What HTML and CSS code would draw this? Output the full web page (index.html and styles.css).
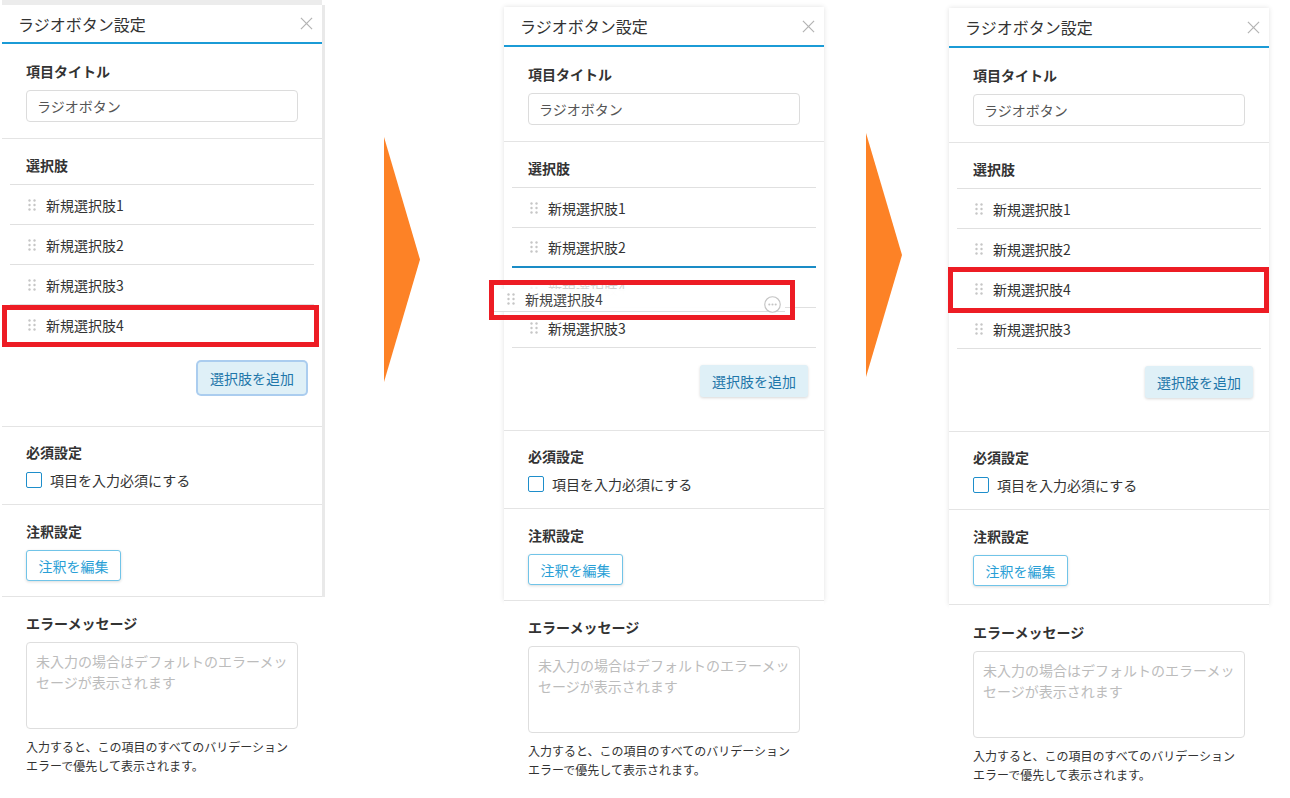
FILE: index.html
```html
<!DOCTYPE html>
<html lang="ja">
<head>
<meta charset="utf-8">
<title>ラジオボタン設定</title>
<link rel="stylesheet" href="styles.css">
</head>
<body>
<div class="page">

  <!-- Panel 1 -->
  <div class="shot s1">
    <div class="card">
      <div class="head">
        <span>ラジオボタン設定</span>
        <svg class="close" viewBox="0 0 14 14"><path d="M1 1L13 13M13 1L1 13"/></svg>
      </div>
      <div class="sec sec-title">
        <div class="label">項目タイトル</div>
        <div class="input">ラジオボタン</div>
      </div>
      <div class="sec sec-choices">
        <div class="label">選択肢</div>
        <ul class="list">
          <li class="item"><svg class="grip" viewBox="0 0 8 12"><circle cx="1.5" cy="1.5" r="1.2"/><circle cx="6.5" cy="1.5" r="1.2"/><circle cx="1.5" cy="6" r="1.2"/><circle cx="6.5" cy="6" r="1.2"/><circle cx="1.5" cy="10.5" r="1.2"/><circle cx="6.5" cy="10.5" r="1.2"/></svg><span>新規選択肢1</span></li>
          <li class="item"><svg class="grip" viewBox="0 0 8 12"><circle cx="1.5" cy="1.5" r="1.2"/><circle cx="6.5" cy="1.5" r="1.2"/><circle cx="1.5" cy="6" r="1.2"/><circle cx="6.5" cy="6" r="1.2"/><circle cx="1.5" cy="10.5" r="1.2"/><circle cx="6.5" cy="10.5" r="1.2"/></svg><span>新規選択肢2</span></li>
          <li class="item"><svg class="grip" viewBox="0 0 8 12"><circle cx="1.5" cy="1.5" r="1.2"/><circle cx="6.5" cy="1.5" r="1.2"/><circle cx="1.5" cy="6" r="1.2"/><circle cx="6.5" cy="6" r="1.2"/><circle cx="1.5" cy="10.5" r="1.2"/><circle cx="6.5" cy="10.5" r="1.2"/></svg><span>新規選択肢3</span></li>
          <li class="item"><svg class="grip" viewBox="0 0 8 12"><circle cx="1.5" cy="1.5" r="1.2"/><circle cx="6.5" cy="1.5" r="1.2"/><circle cx="1.5" cy="6" r="1.2"/><circle cx="6.5" cy="6" r="1.2"/><circle cx="1.5" cy="10.5" r="1.2"/><circle cx="6.5" cy="10.5" r="1.2"/></svg><span>新規選択肢4</span></li>
        </ul>
        <div class="add-row"><button class="btn-add focused">選択肢を追加</button></div>
      </div>
      <div class="sec sec-req">
        <div class="label">必須設定</div>
        <label class="check"><span class="box"></span>項目を入力必須にする</label>
      </div>
      <div class="sec sec-note">
        <div class="label">注釈設定</div>
        <button class="btn-note">注釈を編集</button>
      </div>
    </div>
    <div class="err">
      <div class="label">エラーメッセージ</div>
      <div class="textarea">未入力の場合はデフォルトのエラーメッセージが表示されます</div>
      <p class="help">入力すると、この項目のすべてのバリデーションエラーで優先して表示されます。</p>
    </div>
    <div class="mark mark1"></div>
  </div>

  <div class="arrow a1"></div>

  <!-- Panel 2 -->
  <div class="shot s2">
    <div class="card">
      <div class="head">
        <span>ラジオボタン設定</span>
        <svg class="close" viewBox="0 0 14 14"><path d="M1 1L13 13M13 1L1 13"/></svg>
      </div>
      <div class="sec sec-title">
        <div class="label">項目タイトル</div>
        <div class="input">ラジオボタン</div>
      </div>
      <div class="sec sec-choices">
        <div class="label">選択肢</div>
        <ul class="list">
          <li class="item"><svg class="grip" viewBox="0 0 8 12"><circle cx="1.5" cy="1.5" r="1.2"/><circle cx="6.5" cy="1.5" r="1.2"/><circle cx="1.5" cy="6" r="1.2"/><circle cx="6.5" cy="6" r="1.2"/><circle cx="1.5" cy="10.5" r="1.2"/><circle cx="6.5" cy="10.5" r="1.2"/></svg><span>新規選択肢1</span></li>
          <li class="item drop"><svg class="grip" viewBox="0 0 8 12"><circle cx="1.5" cy="1.5" r="1.2"/><circle cx="6.5" cy="1.5" r="1.2"/><circle cx="1.5" cy="6" r="1.2"/><circle cx="6.5" cy="6" r="1.2"/><circle cx="1.5" cy="10.5" r="1.2"/><circle cx="6.5" cy="10.5" r="1.2"/></svg><span>新規選択肢2</span></li>
          <li class="item ghost"><svg class="grip" viewBox="0 0 8 12"><circle cx="1.5" cy="1.5" r="1.2"/><circle cx="6.5" cy="1.5" r="1.2"/><circle cx="1.5" cy="6" r="1.2"/><circle cx="6.5" cy="6" r="1.2"/><circle cx="1.5" cy="10.5" r="1.2"/><circle cx="6.5" cy="10.5" r="1.2"/></svg><span>新規選択肢4</span></li>
          <li class="item"><svg class="grip" viewBox="0 0 8 12"><circle cx="1.5" cy="1.5" r="1.2"/><circle cx="6.5" cy="1.5" r="1.2"/><circle cx="1.5" cy="6" r="1.2"/><circle cx="6.5" cy="6" r="1.2"/><circle cx="1.5" cy="10.5" r="1.2"/><circle cx="6.5" cy="10.5" r="1.2"/></svg><span>新規選択肢3</span></li>
        </ul>
        <div class="add-row"><button class="btn-add">選択肢を追加</button></div>
      </div>
      <div class="sec sec-req">
        <div class="label">必須設定</div>
        <label class="check"><span class="box"></span>項目を入力必須にする</label>
      </div>
      <div class="sec sec-note">
        <div class="label">注釈設定</div>
        <button class="btn-note">注釈を編集</button>
      </div>
    </div>
    <div class="err">
      <div class="label">エラーメッセージ</div>
      <div class="textarea">未入力の場合はデフォルトのエラーメッセージが表示されます</div>
      <p class="help">入力すると、この項目のすべてのバリデーションエラーで優先して表示されます。</p>
    </div>
    <div class="dragging">
      <svg class="grip" viewBox="0 0 8 12"><circle cx="1.5" cy="1.5" r="1.2"/><circle cx="6.5" cy="1.5" r="1.2"/><circle cx="1.5" cy="6" r="1.2"/><circle cx="6.5" cy="6" r="1.2"/><circle cx="1.5" cy="10.5" r="1.2"/><circle cx="6.5" cy="10.5" r="1.2"/></svg>
      <span>新規選択肢4</span>
      <svg class="more" viewBox="0 0 16 16"><circle class="ring" cx="8" cy="8" r="7.3"/><circle class="dot" cx="5" cy="8" r="1"/><circle class="dot" cx="8" cy="8" r="1"/><circle class="dot" cx="11" cy="8" r="1"/></svg>
    </div>
    <div class="mark mark2"></div>
  </div>

  <div class="arrow a2"></div>

  <!-- Panel 3 -->
  <div class="shot s3">
    <div class="card">
      <div class="head">
        <span>ラジオボタン設定</span>
        <svg class="close" viewBox="0 0 14 14"><path d="M1 1L13 13M13 1L1 13"/></svg>
      </div>
      <div class="sec sec-title">
        <div class="label">項目タイトル</div>
        <div class="input">ラジオボタン</div>
      </div>
      <div class="sec sec-choices">
        <div class="label">選択肢</div>
        <ul class="list">
          <li class="item"><svg class="grip" viewBox="0 0 8 12"><circle cx="1.5" cy="1.5" r="1.2"/><circle cx="6.5" cy="1.5" r="1.2"/><circle cx="1.5" cy="6" r="1.2"/><circle cx="6.5" cy="6" r="1.2"/><circle cx="1.5" cy="10.5" r="1.2"/><circle cx="6.5" cy="10.5" r="1.2"/></svg><span>新規選択肢1</span></li>
          <li class="item"><svg class="grip" viewBox="0 0 8 12"><circle cx="1.5" cy="1.5" r="1.2"/><circle cx="6.5" cy="1.5" r="1.2"/><circle cx="1.5" cy="6" r="1.2"/><circle cx="6.5" cy="6" r="1.2"/><circle cx="1.5" cy="10.5" r="1.2"/><circle cx="6.5" cy="10.5" r="1.2"/></svg><span>新規選択肢2</span></li>
          <li class="item"><svg class="grip" viewBox="0 0 8 12"><circle cx="1.5" cy="1.5" r="1.2"/><circle cx="6.5" cy="1.5" r="1.2"/><circle cx="1.5" cy="6" r="1.2"/><circle cx="6.5" cy="6" r="1.2"/><circle cx="1.5" cy="10.5" r="1.2"/><circle cx="6.5" cy="10.5" r="1.2"/></svg><span>新規選択肢4</span></li>
          <li class="item"><svg class="grip" viewBox="0 0 8 12"><circle cx="1.5" cy="1.5" r="1.2"/><circle cx="6.5" cy="1.5" r="1.2"/><circle cx="1.5" cy="6" r="1.2"/><circle cx="6.5" cy="6" r="1.2"/><circle cx="1.5" cy="10.5" r="1.2"/><circle cx="6.5" cy="10.5" r="1.2"/></svg><span>新規選択肢3</span></li>
        </ul>
        <div class="add-row"><button class="btn-add">選択肢を追加</button></div>
      </div>
      <div class="sec sec-req">
        <div class="label">必須設定</div>
        <label class="check"><span class="box"></span>項目を入力必須にする</label>
      </div>
      <div class="sec sec-note">
        <div class="label">注釈設定</div>
        <button class="btn-note">注釈を編集</button>
      </div>
    </div>
    <div class="err">
      <div class="label">エラーメッセージ</div>
      <div class="textarea">未入力の場合はデフォルトのエラーメッセージが表示されます</div>
      <p class="help">入力すると、この項目のすべてのバリデーションエラーで優先して表示されます。</p>
    </div>
    <div class="mark mark3"></div>
  </div>

</div>
</body>
</html>
```

FILE: styles.css
```css
* { box-sizing: border-box; }

html, body {
  margin: 0;
  padding: 0;
  background: #fff;
}

body {
  font-family: "Noto Sans CJK JP", "Noto Sans", sans-serif;
  color: #333;
  font-size: 14px;
  line-height: 20px;
}

.page {
  display: flex;
  align-items: flex-start;
  width: 1290px;
  height: 798px;
  overflow: hidden;
}

/* ---------- columns ---------- */
.shot {
  position: relative;
  flex: none;
  width: 320px;
}
.s1 { margin: 5px 0 0 2px; }
.s2 { margin: 7px 0 0 84px; }
.s3 { margin: 8px 0 0 47px; }

.arrow {
  flex: none;
  width: 36px;
  background: #fd8226;
  clip-path: polygon(0 0, 100% 50%, 0 100%);
}
.a1 { height: 245px; margin: 137px 0 0 62px; }
.a2 { height: 244px; margin: 133px 0 0 42px; }

/* ---------- card ---------- */
.card {
  background: #fff;
  box-shadow: 0 0 5px rgba(0, 0, 0, 0.12);
}
.s1 .card {
  box-shadow: 0 -5px 0 #ececec, 3px 0 0 #e9e9e9;
}

.head {
  height: 39px;
  display: flex;
  align-items: center;
  justify-content: space-between;
  padding: 0 9px 0 16px;
  border-bottom: 2px solid #1b9bd6;
  font-size: 16px;
  color: #333;
}
.s2 .head, .s3 .head { height: 40px; }

.close {
  width: 13px;
  height: 13px;
  fill: none;
  stroke: #b3b3b3;
  stroke-width: 1.3;
}

.sec {
  padding: 16px 24px 15px;
  border-bottom: 1px solid #e4e4e4;
}
.sec-title { padding-top: 17px; padding-bottom: 16px; }
.sec-choices { padding-bottom: 32px; }
.sec-req { padding-top: 15px; padding-bottom: 14px; }
.sec-note { padding-top: 16px; padding-bottom: 15px; }
.s2 .sec-choices { padding-bottom: 33px; }
.s3 .sec-choices { padding-bottom: 33px; }
.s3 .sec-note { padding-bottom: 18px; }

.label {
  font-weight: 700;
  font-size: 14px;
  line-height: 20px;
  color: #333;
}

.input {
  margin-top: 9px;
  height: 32px;
  border: 1px solid #dcdcdc;
  border-radius: 4px;
  padding: 0 10px;
  display: flex;
  align-items: center;
  color: #555;
}

/* ---------- choice list ---------- */
.list {
  list-style: none;
  margin: 9px -16px 0;
  padding: 0;
  border-top: 1px solid #e0e0e0;
}
.item {
  height: 40px;
  display: flex;
  align-items: center;
  padding-left: 18px;
  border-bottom: 1px solid #e0e0e0;
  color: #333;
}
.item.drop {
  border-bottom: 2px solid #1a8cc6;
}
.item.ghost span, .item.ghost .grip {
  opacity: 0.22;
}
.grip {
  width: 8px;
  height: 12px;
  fill: #c6c6c6;
  margin-right: 10px;
  flex: none;
}

.add-row {
  display: flex;
  justify-content: flex-end;
  margin: 17px -8px 0 0;
}
.btn-add {
  font-family: inherit;
  font-size: 14px;
  width: 108px;
  height: 32px;
  border: none;
  border-radius: 3px;
  background: #dff0f7;
  color: #1f77aa;
  box-shadow: 0 1px 3px rgba(0, 0, 0, 0.16);
  padding: 0;
}
.btn-add.focused {
  box-shadow: 0 0 0 2px #abcdef;
}

/* ---------- required ---------- */
.check {
  margin-top: 8px;
  display: flex;
  align-items: center;
  height: 20px;
  color: #333;
}
.box {
  width: 16px;
  height: 16px;
  border: 1.5px solid #1e8ecb;
  border-radius: 2px;
  margin-right: 8px;
  background: #fff;
}

/* ---------- note ---------- */
.btn-note {
  display: block;
  margin-top: 9px;
  font-family: inherit;
  font-size: 14px;
  width: 95px;
  height: 31px;
  padding: 0;
  border: 1px solid #71c4e8;
  border-radius: 3px;
  background: #fff;
  color: #2a9fd6;
  box-shadow: 0 1px 3px rgba(0, 0, 0, 0.14);
}

/* ---------- error message ---------- */
.err {
  padding: 16px 24px 0;
  background: #fff;
}
.s3 .err { padding-top: 17px; }
.textarea {
  margin-top: 9px;
  height: 87px;
  border: 1px solid #dedede;
  border-radius: 4px;
  padding: 8px 9px;
  color: #bcbcbc;
  font-size: 14px;
  line-height: 21px;
}
.help {
  margin: 8px 0 0;
  font-size: 12px;
  line-height: 19px;
  color: #333;
}

/* ---------- drag overlay (panel 2) ---------- */
.dragging {
  position: absolute;
  left: -11px;
  top: 282px;
  width: 292px;
  height: 23px;
  display: flex;
  align-items: flex-start;
  padding-left: 14px;
  background: rgba(255, 255, 255, 0.96);
  border-bottom: 1px solid #dddddd;
  color: #444;
}
.dragging .grip {
  margin-top: 4px;
}
.more {
  width: 17px;
  height: 17px;
  margin: 7px 4px 0 auto;
  flex: none;
}
.more .ring {
  fill: #fff;
  stroke: #c4c4c4;
  stroke-width: 1.1;
}
.more .dot {
  fill: #c4c4c4;
}

/* ---------- red annotation boxes ---------- */
.mark {
  position: absolute;
  border: 5px solid #ed1c24;
}
.mark1 { left: 0; top: 300px; width: 317px; height: 42px; }
.mark2 { left: -15px; top: 273px; width: 306px; height: 40px; }
.mark3 { left: -1px; top: 259px; width: 321px; height: 46px; }
```
